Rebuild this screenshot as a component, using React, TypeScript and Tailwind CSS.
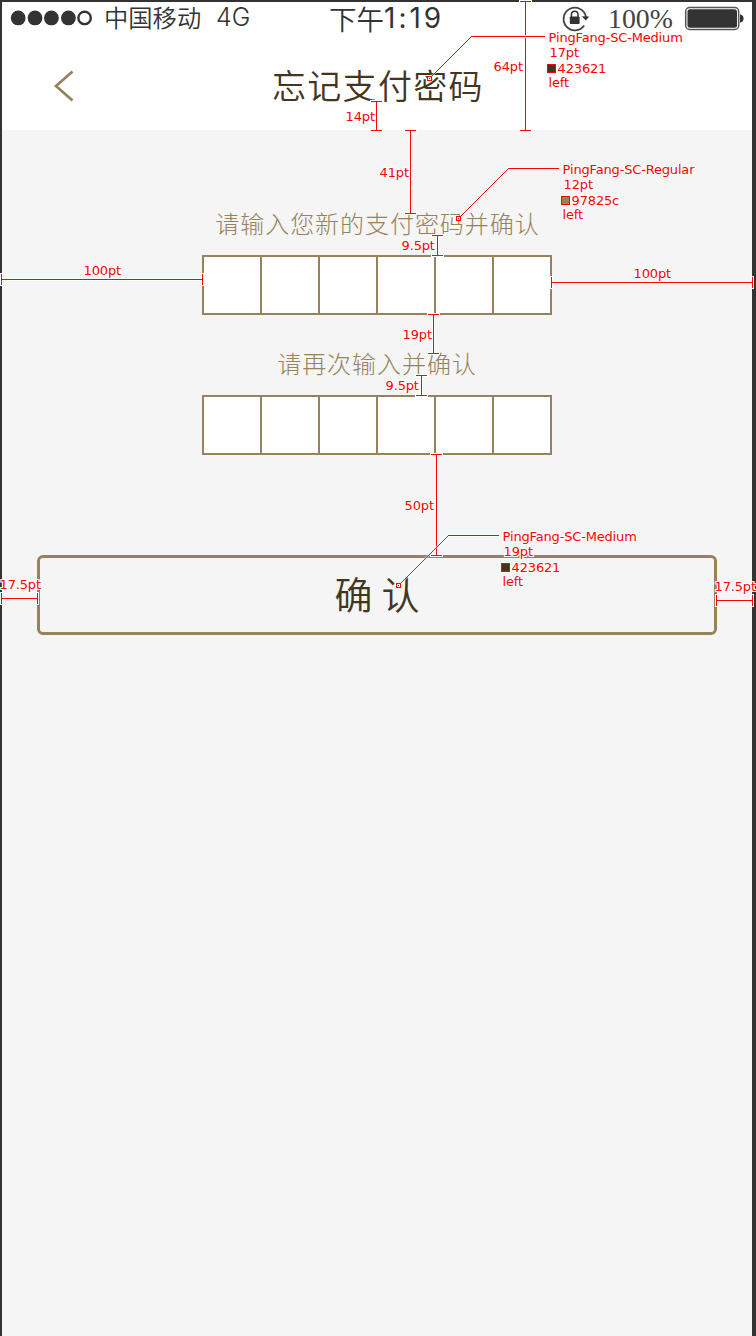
import React from "react";

type Dimension = { axis: "x" | "y"; at: number; from: number; to: number };
type Leader = { x: number; y: number; elbowX: number; elbowY: number; endX: number };
type Note = { text: string; place: string };

const dimensions: Dimension[] = [
  { axis: "y", at: 525, from: 1, to: 130 },
  { axis: "y", at: 376, from: 101, to: 130 },
  { axis: "y", at: 410, from: 130, to: 213 },
  { axis: "y", at: 437, from: 235, to: 255 },
  { axis: "y", at: 433, from: 314, to: 353 },
  { axis: "y", at: 421, from: 375, to: 395 },
  { axis: "y", at: 436, from: 454, to: 555 },
  { axis: "x", at: 279, from: 1, to: 202 },
  { axis: "x", at: 282, from: 551, to: 752 },
  { axis: "x", at: 598, from: 1, to: 37 },
  { axis: "x", at: 600, from: 716, to: 752 },
];

const leaders: Leader[] = [
  { x: 427, y: 76, elbowX: 471, elbowY: 36, endX: 545 },
  { x: 456, y: 216, elbowX: 508, elbowY: 168, endX: 559 },
  { x: 396, y: 583, elbowX: 448, elbowY: 535, endX: 499 },
];

const swatches = [
  { x: 547, y: 64, fill: "#423621" },
  { x: 561, y: 196, fill: "#97825c" },
  { x: 501, y: 563, fill: "#423621" },
];

const notes: Note[] = [
  { text: "PingFang-SC-Medium", place: "left-[548px] top-[30px]" },
  { text: "17pt", place: "left-[549px] top-[45px]" },
  { text: "423621", place: "left-[557px] top-[61px]" },
  { text: "left", place: "left-[548px] top-[75px]" },
  { text: "PingFang-SC-Regular", place: "left-[562px] top-[162px]" },
  { text: "12pt", place: "left-[563px] top-[177px]" },
  { text: "97825c", place: "left-[571px] top-[193px]" },
  { text: "left", place: "left-[562px] top-[207px]" },
  { text: "PingFang-SC-Medium", place: "left-[502px] top-[529px]" },
  { text: "19pt", place: "left-[503px] top-[544px]" },
  { text: "423621", place: "left-[511px] top-[560px]" },
  { text: "left", place: "left-[502px] top-[574px]" },
  { text: "64pt", place: "left-[493px] top-[59px]" },
  { text: "14pt", place: "left-[345px] top-[109px]" },
  { text: "41pt", place: "left-[379px] top-[165px]" },
  { text: "9.5pt", place: "left-[401px] top-[238px]" },
  { text: "19pt", place: "left-[402px] top-[327px]" },
  { text: "9.5pt", place: "left-[385px] top-[378px]" },
  { text: "50pt", place: "left-[404px] top-[498px]" },
  { text: "100pt", place: "left-[83px] top-[263px]" },
  { text: "100pt", place: "left-[633px] top-[266px]" },
  { text: "17.5pt", place: "left-[-1px] top-[577px]" },
  { text: "17.5pt", place: "left-[714px] top-[579px]" },
];

function dimensionRects({ axis, at, from, to }: Dimension) {
  const length = to - from + 1;
  return axis === "y"
    ? [
        [at, from, 1, length],
        [at - 5, from, 11, 1],
        [at - 5, to, 11, 1],
      ]
    : [
        [from, at, length, 1],
        [from, at - 5, 1, 11],
        [to, at - 5, 1, 11],
      ];
}

function Annotations() {
  const rects = dimensions.flatMap(dimensionRects);
  return (
    <div className="pointer-events-none absolute inset-0 overflow-hidden">
      <svg className="absolute inset-0" width="756" height="1336" viewBox="0 0 756 1336">
        <g fill="#fff">
          {rects.map(([x, y, w, h], i) => (
            <rect key={i} x={x - 1} y={y - 1} width={w + 2} height={h + 2} />
          ))}
        </g>
        <g fill="#f00">
          {rects.map(([x, y, w, h], i) => (
            <rect key={i} x={x} y={y} width={w} height={h} />
          ))}
        </g>
        {leaders.map((l) => (
          <g key={l.x}>
            <rect x={l.elbowX} y={l.elbowY - 1} width={l.endX - l.elbowX + 1} height="3" fill="#fff" />
            <path d={`M${l.x + 3} ${l.y + 2}L${l.elbowX + 0.5} ${l.elbowY + 0.5}`} stroke="#fff" strokeOpacity="0.5" strokeWidth="2.4" />
            <path d={`M${l.x + 3} ${l.y + 2}L${l.elbowX + 0.5} ${l.elbowY + 0.5}`} stroke="#f00" strokeWidth="1" />
            <rect x={l.elbowX} y={l.elbowY} width={l.endX - l.elbowX} height="1" fill="#f00" />
            <rect x={l.x} y={l.y} width="5" height="5" fill="#f00" />
            <rect x={l.x + 1} y={l.y + 1} width="3" height="3" fill="#fff" />
            <rect x={l.x + 2} y={l.y + 2} width="1" height="1" fill="#f00" />
          </g>
        ))}
        {swatches.map((s) => (
          <g key={s.y}>
            <rect x={s.x - 1} y={s.y - 1} width="11" height="11" fill="#fff" />
            <rect x={s.x + 0.5} y={s.y + 0.5} width="8" height="8" fill={s.fill} stroke="#f00" />
          </g>
        ))}
      </svg>
      {notes.map((n) => (
        <span
          key={n.place}
          className={`absolute ml-[0.6px] whitespace-nowrap font-['DejaVu_Sans',sans-serif] text-[13px] leading-[14px] mt-px tracking-[-0.17px] text-[#f00] [text-shadow:1px_0_#fff,-1px_0_#fff,0_1px_#fff,0_-1px_#fff,1px_1px_#fff,-1px_-1px_#fff,1px_-1px_#fff,-1px_1px_#fff] ${n.place}`}
        >
          {n.text}
        </span>
      ))}
    </div>
  );
}

function StatusBar() {
  return (
    <div className="flex h-[34px] items-center text-[#333]">
      <svg className="ml-2 shrink-0" width="84" height="32" viewBox="10 3 84 32">
        {[18.2, 35, 51.4, 68.4].map((cx) => (
          <circle key={cx} cx={cx} cy="17.9" r="7.4" fill="#333" />
        ))}
        <circle cx="84.6" cy="17.9" r="6.2" fill="none" stroke="#333" strokeWidth="2.4" />
      </svg>
      <span className="mb-[4px] ml-[10px] w-[112px] shrink-0 whitespace-nowrap text-[24.3px] leading-8 font-[350]">中国移动</span>
      <span className="mb-[4px] w-[113px] shrink-0 font-['Inter',sans-serif] text-[25px] leading-8 font-[350]">4G</span>
      <span className="mb-[3px] flex w-[230px] shrink-0 whitespace-nowrap leading-8">
        <span className="text-[27.5px] font-[350]">下午</span>
        <span className="font-['Inter',sans-serif] text-[28px] font-normal tracking-[3px]">1:19</span>
      </span>
      <svg className="shrink-0" width="32" height="32" viewBox="559 3 32 32">
        <path d="M584.2 25.4A11.3 11.3 0 1 1 586 17" fill="none" stroke="#444" strokeWidth="1.8" />
        <path d="M581.8 16.2l7.4 0.2L585.8 20.6z" fill="#333" />
        <rect x="569.8" y="16.5" width="9.8" height="7.5" rx="0.8" fill="#333" />
        <path d="M571.4 17v-2.4a3.3 3.3 0 0 1 6.6 0V17" fill="none" stroke="#333" strokeWidth="1.5" />
      </svg>
      <span className="ml-[17px] w-[75px] shrink-0 font-['Liberation_Serif',serif] text-[27.8px] leading-8 text-[#444]">100%</span>
      <svg className="shrink-0" width="62" height="32" viewBox="683 3 62 32">
        <rect x="685.7" y="7.5" width="53" height="22" rx="4" fill="none" stroke="#555" strokeWidth="1.5" />
        <rect x="687.5" y="9.2" width="49.5" height="18.6" rx="2.5" fill="#333" />
        <path d="M740 14.3q3.6 1 3.6 4.2t-3.6 4.2z" fill="#333" />
      </svg>
    </div>
  );
}

function CodeInput() {
  return (
    <div className="mx-auto flex h-[60px] w-[350px] border-2 border-[#97825c] bg-white">
      {[0, 1, 2, 3, 4, 5].map((i) => (
        <div key={i} className="w-[58px] shrink-0 border-r-2 border-[#97825c] last:w-[56px] last:border-r-0" />
      ))}
    </div>
  );
}

export default function App() {
  return (
    <div className="relative w-[756px]">
      <div className="h-[1336px] overflow-hidden border-t-2 border-r-4 border-l-2 border-[#333] bg-[#f5f5f5] font-['Noto_Sans_CJK_SC',sans-serif]">
        <header className="h-[128px] bg-white">
          <StatusBar />
          <div className="flex h-[94px] items-center pt-[8px]">
            <svg className="mb-[2px] ml-[50px] shrink-0" width="24" height="34" viewBox="52 69 24 34">
              <path d="M72.5 71.5L56 86l16.5 14.5" fill="none" stroke="#97825c" strokeWidth="2.7" />
            </svg>
            <h1 className="mb-[5px] ml-[196px] text-[34px] leading-[48px] font-[350] tracking-[1.3px] whitespace-nowrap text-[#423621]">
              忘记支付密码
            </h1>
          </div>
        </header>
        <main className="pt-[78px]">
          <p className="mb-[17px] h-[30px] pl-px text-center text-[24px] leading-[30px] font-light tracking-[0.95px] text-[#97825c]">
            请输入您新的支付密码并确认
          </p>
          <CodeInput />
          <p className="mt-[33px] mb-[17px] h-[30px] text-center text-[24px] leading-[30px] font-light tracking-[0.95px] text-[#97825c]">
            请再次输入并确认
          </p>
          <CodeInput />
          <button className="mt-[100px] ml-[35px] flex h-[80px] w-[680px] items-center justify-center rounded-[6px] border-[3px] border-[#97825c] pb-[5px] text-[38px] leading-[50px] font-[350] text-[#423621]">
            <span>确</span>
            <span className="ml-[9px]">认</span>
          </button>
        </main>
      </div>
      <Annotations />
    </div>
  );
}
